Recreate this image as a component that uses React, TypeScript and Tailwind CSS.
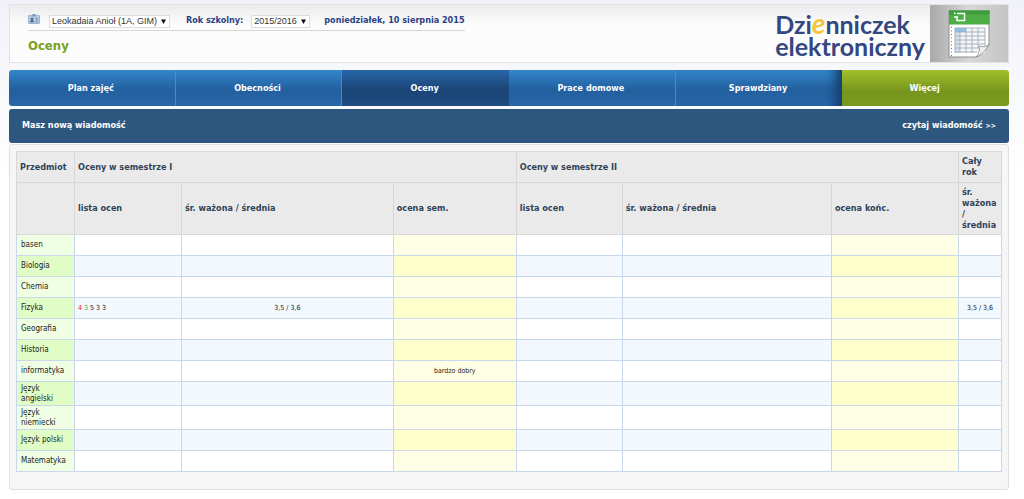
import React from 'react';

const navItems = ['Plan zajęć', 'Obecności', 'Oceny', 'Prace domowe', 'Sprawdziany', 'Więcej'];

type Grade = { value: string; color: string };

type Subject = {
  name: string;
  tall?: boolean;
  grades?: Grade[];
  average?: string;
  semester?: string;
  year?: string;
};

const subjects: Subject[] = [
  { name: 'basen' },
  { name: 'Biologia' },
  { name: 'Chemia' },
  {
    name: 'Fizyka',
    grades: [
      { value: '4', color: 'text-[#e62030]' },
      { value: '3', color: 'text-[#2fae45]' },
      { value: '5', color: 'text-[#222222]' },
      { value: '3', color: 'text-[#222222]' },
      { value: '3', color: 'text-[#222222]' },
    ],
    average: '3,5 / 3,6',
    year: '3,5 / 3,6',
  },
  { name: 'Geografia' },
  { name: 'Historia' },
  { name: 'informatyka', semester: 'bardzo dobry' },
  { name: 'Język angielski', tall: true },
  { name: 'Język niemiecki', tall: true },
  { name: 'Język polski' },
  { name: 'Matematyka' },
];

const Picker = ({ id, label, value, className }: { id: string; label: string; value: string; className: string }) => (
  <div className={`relative ${className}`}>
    <select
      id={id}
      aria-label={label}
      className="block w-full h-[13px] appearance-none border border-[#dcdcdc] bg-white pl-[2px] pr-2 font-['Liberation_Sans'] text-[9px] leading-[11px] font-normal text-[#333333]"
    >
      <option>{value}</option>
    </select>
    <svg className="pointer-events-none absolute right-1 top-1 w-[5px] h-[5px]" viewBox="0 0 6 6" aria-hidden="true">
      <path d="M0 0.5h6L3 6z" fill="#111111" />
    </svg>
  </div>
);

const BadgeIcon = () => (
  <svg className="w-3 h-[10px] mb-1" viewBox="0 0 12 10" aria-hidden="true">
    <rect x="0.5" y="1.5" width="11" height="8" rx="0.5" fill="#b5cce2" stroke="#9db5cd" />
    <rect x="4.5" y="0" width="3" height="2.5" fill="#7f97b2" />
    <circle cx="4" cy="4.7" r="1.3" fill="#45668c" />
    <path d="M2 8.3c0-3 4-3 4 0z" fill="#45668c" />
    <path d="M7.5 4.5h2.5M7.5 6.2h2.5M7.5 8h2.5" stroke="#6b87a6" strokeWidth="0.8" />
  </svg>
);

const SheetIcon = () => (
  <svg className="w-[43px] h-12" viewBox="0 0 43 48" aria-hidden="true">
    <path d="M1 1h40v33c-1 3-9 12-13 13H1z" fill="#ffffff" stroke="#8c8c8c" strokeWidth="1" />
    <rect x="1" y="0.5" width="40.5" height="14" fill="#4cae45" />
    <rect x="1" y="0.5" width="40.5" height="4" fill="#3f9e3c" />
    <path d="M9 3.5h7.5v7H9V7M6 3.2h1.6M6 7h4" fill="none" stroke="#ffffff" strokeWidth="1.5" />
    <rect x="7" y="18" width="30" height="25" fill="#f4f6f8" />
    <rect x="7" y="18" width="11" height="4" fill="#8fc3ee" />
    <rect x="7" y="22" width="5" height="21" fill="#d5e3ee" />
    <path
      d="M7 18h30M7 22h30M7 26h30M7 30h30M7 34h30M7 38h25M7 42h22M7 18v25M12 18v25M18 18v25M24 18v25M30 18v20M37 18v18"
      stroke="#9ba6b0"
      strokeWidth="0.8"
    />
    <path d="M3.5 17v29" stroke="#777777" strokeWidth="1" strokeDasharray="1 2.5" />
    <path d="M41 34c-2 3-6 3-10 2 1 4 0 8-3 11 5-1 11-8 13-13z" fill="#eeeeee" stroke="#8c8c8c" strokeWidth="0.8" />
  </svg>
);

const Header = () => (
  <header className="flex justify-between h-[59px] border border-[#e2e2e6] bg-linear-to-b from-[#ebebee] via-[#fcfcfc] via-35% to-[#fcfcfc]">
    <div className="pl-[18px] pt-[9px]">
      <div className="flex items-center h-[17px] border-b border-[#d3d9d3] pb-[2px] text-[9px] font-bold text-[#2b4187]">
        <BadgeIcon />
        <Picker id="student" label="Uczeń" value="Leokadaia Anioł (1A, GIM)" className="ml-[9px] w-[121px]" />
        <label htmlFor="year" className="ml-4">Rok szkolny:</label>
        <Picker id="year" label="Rok szkolny" value="2015/2016" className="ml-2 w-[59px]" />
        <span className="ml-[14px]">poniedziałek, 10 sierpnia 2015</span>
      </div>
      <h1 className="mt-[7px] text-[13px] leading-4 font-bold text-[#7a9f23]">Oceny</h1>
    </div>
    <div className="flex">
      <div className="pr-[5px] pt-2 font-['Lato',sans-serif] text-[25px] leading-[22px] font-bold text-[#34477f]">
        <div>
          Dzi<span className="text-[28px] leading-[0px] italic text-[#f5c63c]">e</span>nniczek
        </div>
        <div>elektroniczny</div>
      </div>
      <div className="flex items-center justify-center w-[78px] bg-linear-to-r from-[#a9a9a9] via-[#d8d8d8] to-[#c4c4c4]">
        <SheetIcon />
      </div>
    </div>
  </header>
);

const Nav = () => (
  <nav className="mt-[7px] grid grid-cols-6 h-9 rounded-[3px] overflow-hidden text-[9px] font-bold text-white">
    {navItems.map((item) => {
      let look = 'border-r border-r-[#4d8ac4] bg-linear-to-b from-[#3387cb] via-[#235f9f] via-55% to-[#2967a9]';
      if (item === 'Oceny') look = 'bg-linear-to-b from-[#2866a8] via-[#1b4577] via-55% to-[#1f4b80]';
      if (item === 'Sprawdziany') look = 'bg-linear-to-b from-[#3387cb] via-[#235f9f] via-55% to-[#2967a9] shadow-[inset_-14px_0_12px_-8px_#123b66]';
      if (item === 'Więcej') look = 'bg-linear-to-b from-[#a3c02c] via-[#76951d] via-60% to-[#7b9a1f]';
      return (
        <a key={item} href="#" className={`flex items-center justify-center pt-px pr-[2px] ${look}`}>
          {item}
        </a>
      );
    })}
  </nav>
);

const headCell = 'border border-[#d6d8da] bg-[#eaeaea] px-[3px] text-left text-[9px] leading-[11px] font-bold text-[#2f4358]';
const cell = 'border border-[#c8d8ea]';

const GradesTable = () => (
  <table className="w-full table-fixed border-collapse text-[#222222]">
    <colgroup>
      <col className="w-[58px]" />
      <col className="w-[107px]" />
      <col className="w-[21.5%]" />
      <col className="w-[123px]" />
      <col className="w-[106px]" />
      <col />
      <col className="w-[127px]" />
      <col className="w-[43px]" />
    </colgroup>
    <thead>
      <tr className="h-[31px]">
        <th className={headCell}>Przedmiot</th>
        <th colSpan={3} className={headCell}>Oceny w semestrze I</th>
        <th colSpan={3} className={headCell}>Oceny w semestrze II</th>
        <th className={headCell}>Cały rok</th>
      </tr>
      <tr className="h-[52px]">
        <th className={headCell}></th>
        <th className={headCell}>lista ocen</th>
        <th className={headCell}>śr. ważona / średnia</th>
        <th className={headCell}>ocena sem.</th>
        <th className={headCell}>lista ocen</th>
        <th className={headCell}>śr. ważona / średnia</th>
        <th className={headCell}>ocena końc.</th>
        <th className={headCell}>śr. ważona / średnia</th>
      </tr>
    </thead>
    <tbody className="text-center text-[7px] leading-[10px]">
      {subjects.map((subject, i) => {
        const odd = i % 2 === 1;
        const yellow = odd ? 'bg-[#ffffcc]' : 'bg-[#ffffe5]';
        return (
          <tr key={subject.name} className={`${subject.tall ? 'h-6' : 'h-[21px]'} ${odd ? 'bg-[#f3f7fe]' : 'bg-white'}`}>
            <td className={`${cell} px-1 text-left text-[8px] ${odd ? 'bg-[#e1fdc6]' : 'bg-[#f0ffe3]'}`}>{subject.name}</td>
            <td className={`${cell} px-[3px] text-left`}>
              {subject.grades?.map((grade, n) => (
                <span key={n} className={grade.color}>{grade.value} </span>
              ))}
            </td>
            <td className={cell}>{subject.average}</td>
            <td className={`${cell} ${yellow}`}>{subject.semester}</td>
            <td className={cell}></td>
            <td className={cell}></td>
            <td className={`${cell} ${yellow}`}></td>
            <td className={cell}>{subject.year}</td>
          </tr>
        );
      })}
    </tbody>
  </table>
);

const App: React.FC = () => {
  return (
    <div className="min-h-screen bg-linear-to-b from-[#f1f2f9] to-white to-35% pl-[9px] pr-[15px] pt-1 font-['DejaVu_Sans_Condensed','DejaVu_Sans',sans-serif]">
      <Header />
      <Nav />
      <div className="mt-[3px] flex items-center justify-between h-[34px] rounded-[3px] bg-[#2d577f] px-[13px] text-[9px] font-bold text-white">
        <span>Masz nową wiadomość</span>
        <a href="#">
          czytaj wiadomość <span className="text-[7px]">&gt;&gt;</span>
        </a>
      </div>
      <main className="mt-px rounded-[3px] border border-[#dcdfe3] bg-[#f6f6f6] px-[6px] pt-[6px] pb-[17px]">
        <GradesTable />
      </main>
    </div>
  );
};

export default App;
